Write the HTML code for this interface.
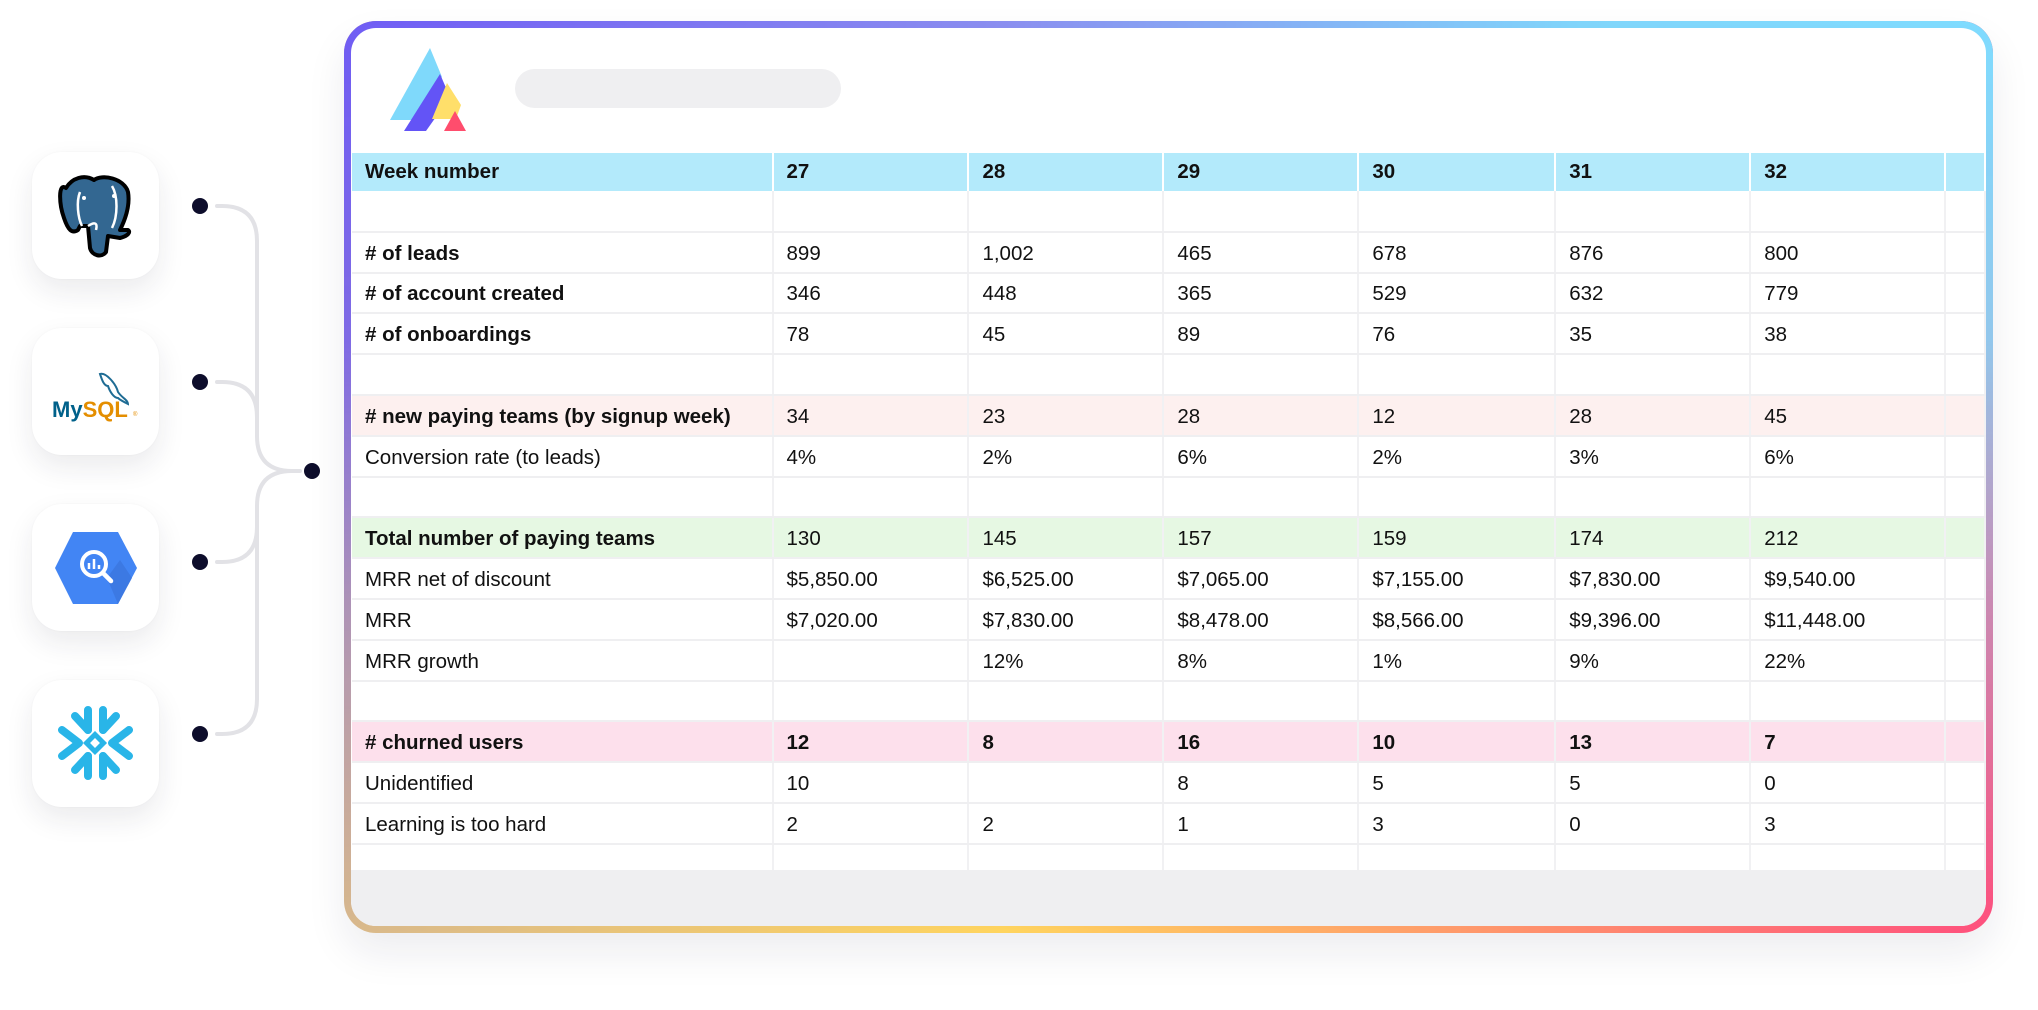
<!DOCTYPE html>
<html><head><meta charset="utf-8"><style>
*{margin:0;padding:0;box-sizing:border-box}
body{width:2038px;height:1010px;background:#fff;position:relative;overflow:hidden;font-family:"Liberation Sans",sans-serif;color:#111}
.card{position:absolute;left:32px;width:127px;height:127px;border-radius:30px;background:#fff;box-shadow:0 12px 28px rgba(30,30,60,0.09),0 0 2px rgba(0,0,0,0.04)}
.frame{position:absolute;left:344px;top:21px;width:1649px;height:912px;border-radius:32px;background:linear-gradient(90deg,#d9b98c 0%,#ffd45e 40%,#ff8a6e 75%,#ff4f7d 100%);box-shadow:0 20px 40px rgba(30,30,60,0.08);overflow:hidden}
.frame:before{content:"";position:absolute;inset:0;background:linear-gradient(90deg,#6f5cf4 0%,#8a8ef0 40%,#80d5fb 75%,#7fdcff 100%);-webkit-mask-image:linear-gradient(180deg,#000 0%,rgba(0,0,0,.85) 35%,rgba(0,0,0,.4) 65%,transparent 100%);mask-image:linear-gradient(180deg,#000 0%,rgba(0,0,0,.85) 35%,rgba(0,0,0,.4) 65%,transparent 100%)}
.inner{position:absolute;left:7px;top:7px;right:7px;bottom:7px;border-radius:25px;background:#fff;overflow:hidden}
.gray{position:absolute;left:0;right:0;top:842px;bottom:0;background:#efeff1}
.pill{position:absolute;left:164px;top:41px;width:326px;height:39px;border-radius:20px;background:#efeff1}
table{position:absolute;left:1px;top:125px;border-collapse:collapse;table-layout:fixed;font-size:20.5px}
td{height:40.8px;border-bottom:2px solid #efeff1;border-right:2px solid #f1f1f3;padding:3px 0 0 13px;white-space:nowrap;vertical-align:middle;overflow:hidden}
tr.h td{height:38px;background:#b3eafb;font-weight:bold;border-right:2px solid #fff;border-bottom:none;padding-top:0}
tr.b td:first-child{font-weight:bold}
tr.bb td{font-weight:bold}
tr.p td{background:#fdf0ef}
tr.g td{background:#e6f8e3}
tr.k td{background:#fde0ec}
tr.last td{height:26px;border-bottom:none}
</style></head><body>

<svg style="position:absolute;left:0;top:0" width="340" height="1010">
<g fill="none" stroke="#e2e2e6" stroke-width="4" stroke-linecap="round">
<path d="M217 206 H222 Q257 206 257 241 V436 Q257 471 292 471 H300"/>
<path d="M217 382 H222 Q257 382 257 417"/>
<path d="M217 562 H222 Q257 562 257 527"/>
<path d="M217 734 H222 Q257 734 257 699 V506 Q257 471 292 471"/>
</g>
<g fill="#0d0d2b">
<circle cx="200" cy="206" r="8"/><circle cx="200" cy="382" r="8"/><circle cx="200" cy="562" r="8"/><circle cx="200" cy="734" r="8"/><circle cx="312" cy="471" r="8"/>
</g>
</svg>

<div class="card" style="top:152px"><svg width="127" height="127" viewBox="0 0 127 127">
<path d="M34 36 C26 30 27 52 32 66 C36 78 40 82 46 78 L48 74 L56 74 L58 96 C60 104 70 106 74 100 L76 84 L88 86 C96 84 99 80 96 78 L88 78 C94 66 98 52 96 40 C92 26 70 22 62 28 C52 22 40 26 34 36 Z" fill="#336791" stroke="#000" stroke-width="4" stroke-linejoin="round"/>
<path d="M48 40 C44 50 46 66 50 74 M80 34 C86 44 86 64 80 76 M56 74 C62 70 66 70 64 78" fill="none" stroke="#fff" stroke-width="2.5"/>
<circle cx="52" cy="46" r="2" fill="#fff"/><circle cx="82" cy="44" r="2" fill="#fff"/>
</svg></div>

<div class="card" style="top:328px"><svg width="127" height="127" viewBox="0 0 127 127">
<path d="M68 46 C74 44 84 56 86 64 C90 70 96 72 96 76 C92 74 88 72 86 70 C82 70 78 64 76 58 C72 58 70 52 68 46 Z" fill="none" stroke="#1f6c94" stroke-width="2"/>
<text x="20" y="89" font-family="Liberation Sans" font-size="22" font-weight="bold" fill="#00618a">My<tspan fill="#e48e00">SQL</tspan></text>
<text x="101" y="88" font-size="6" fill="#e48e00">®</text>
</svg></div>

<div class="card" style="top:504px"><svg width="127" height="127" viewBox="0 0 127 127">
<polygon points="23,64 41,28 86,28 105,64 86,100 41,100" fill="#4285f4"/>
<path d="M75 74 L86 100 L100 74 L88 56 Z" fill="#3a74db" opacity=".7"/>
<circle cx="62" cy="60" r="12" fill="none" stroke="#fff" stroke-width="4"/>
<path d="M71 69 L79 77" stroke="#fff" stroke-width="4.5" stroke-linecap="round"/>
<path d="M57 59 V65 M62 55 V65 M67 61 V65" stroke="#fff" stroke-width="2.5"/>
</svg></div>

<div class="card" style="top:680px"><svg width="127" height="127" viewBox="0 0 127 127">
<g stroke="#29b5e8" stroke-width="8" stroke-linecap="round" stroke-linejoin="round" fill="none">
<path d="M56 30 V50 M71 30 V50 M56 76 V96 M71 76 V96"/>
<path d="M43 36 L56 50 M84 36 L71 50 M43 90 L56 76 M84 90 L71 76"/>
<path d="M30 50 L47 63 L30 76 M97 50 L80 63 L97 76"/>
</g>
<rect x="57" y="57" width="12" height="12" transform="rotate(45 63 63)" fill="none" stroke="#29b5e8" stroke-width="5"/>
</svg></div>

<div class="frame"><div class="inner">
<svg style="position:absolute;left:39px;top:19px" width="80" height="86" viewBox="0 0 80 86">
<polygon points="40,1 52,30 22,73 0,73" fill="#7fd9fb"/>
<polygon points="50,27 60,50 36,84 14,84" fill="#6354f6"/>
<polygon points="57,36 71,58 66,72 42,72" fill="#ffdf6a"/>
<polygon points="65,64 76,84 54,84" fill="#ff4d6d"/>
</svg>
<div class="pill"></div>
<div class="gray"></div>
<table>
<colgroup><col style="width:421px"><col style="width:197px"><col style="width:196px"><col style="width:196px"><col style="width:198px"><col style="width:196px"><col style="width:196px"><col style="width:40px"></colgroup>
<tr class="h"><td>Week number</td><td>27</td><td>28</td><td>29</td><td>30</td><td>31</td><td>32</td><td></td></tr>
<tr><td></td><td></td><td></td><td></td><td></td><td></td><td></td><td></td></tr>
<tr class="b"><td># of leads</td><td>899</td><td>1,002</td><td>465</td><td>678</td><td>876</td><td>800</td><td></td></tr>
<tr class="b"><td># of account created</td><td>346</td><td>448</td><td>365</td><td>529</td><td>632</td><td>779</td><td></td></tr>
<tr class="b"><td># of onboardings</td><td>78</td><td>45</td><td>89</td><td>76</td><td>35</td><td>38</td><td></td></tr>
<tr><td></td><td></td><td></td><td></td><td></td><td></td><td></td><td></td></tr>
<tr class="b p"><td># new paying teams (by signup week)</td><td>34</td><td>23</td><td>28</td><td>12</td><td>28</td><td>45</td><td></td></tr>
<tr><td>Conversion rate (to leads)</td><td>4%</td><td>2%</td><td>6%</td><td>2%</td><td>3%</td><td>6%</td><td></td></tr>
<tr><td></td><td></td><td></td><td></td><td></td><td></td><td></td><td></td></tr>
<tr class="b g"><td>Total number of paying teams</td><td>130</td><td>145</td><td>157</td><td>159</td><td>174</td><td>212</td><td></td></tr>
<tr><td>MRR net of discount</td><td>$5,850.00</td><td>$6,525.00</td><td>$7,065.00</td><td>$7,155.00</td><td>$7,830.00</td><td>$9,540.00</td><td></td></tr>
<tr><td>MRR</td><td>$7,020.00</td><td>$7,830.00</td><td>$8,478.00</td><td>$8,566.00</td><td>$9,396.00</td><td>$11,448.00</td><td></td></tr>
<tr><td>MRR growth</td><td></td><td>12%</td><td>8%</td><td>1%</td><td>9%</td><td>22%</td><td></td></tr>
<tr><td></td><td></td><td></td><td></td><td></td><td></td><td></td><td></td></tr>
<tr class="bb k"><td># churned users</td><td>12</td><td>8</td><td>16</td><td>10</td><td>13</td><td>7</td><td></td></tr>
<tr><td>Unidentified</td><td>10</td><td></td><td>8</td><td>5</td><td>5</td><td>0</td><td></td></tr>
<tr><td>Learning is too hard</td><td>2</td><td>2</td><td>1</td><td>3</td><td>0</td><td>3</td><td></td></tr>
<tr class="last"><td></td><td></td><td></td><td></td><td></td><td></td><td></td><td></td></tr>
</table>
</div></div>
</body></html>
